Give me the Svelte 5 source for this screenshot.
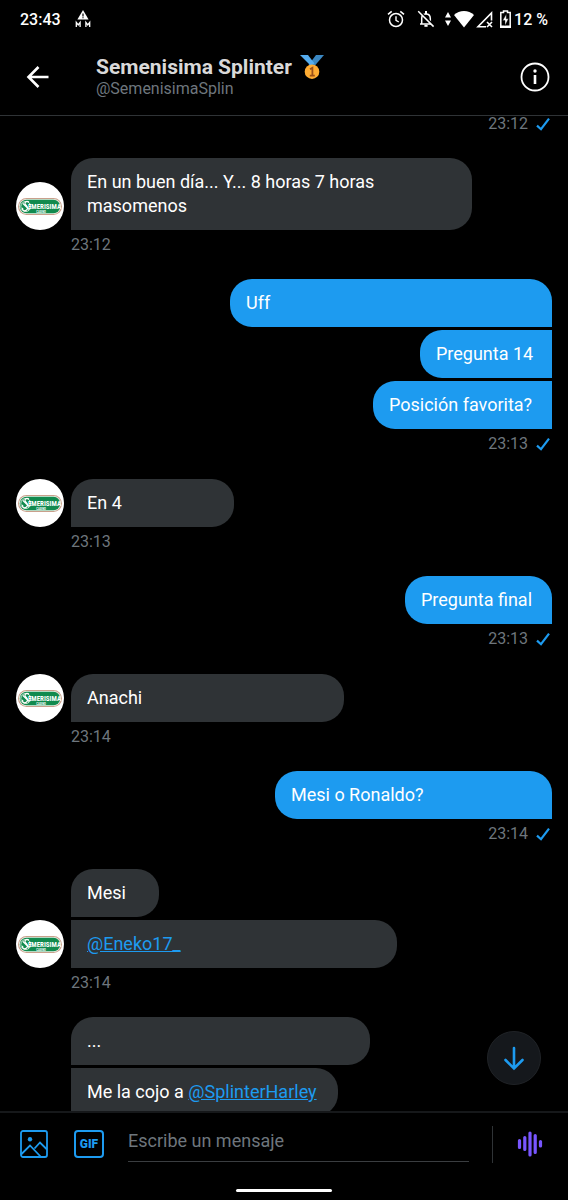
<script>
  const groups = [
    {
      from: 'them',
      time: '23:12',
      items: [{ width: 401, parts: [{ text: 'En un buen día... Y... 8 horas 7 horas masomenos' }] }]
    },
    {
      from: 'me',
      time: '23:13',
      items: [
        { width: 322, parts: [{ text: 'Uff' }] },
        { width: 132, parts: [{ text: 'Pregunta 14' }] },
        { width: 179, parts: [{ text: 'Posición favorita?' }] }
      ]
    },
    { from: 'them', time: '23:13', items: [{ width: 163, parts: [{ text: 'En 4' }] }] },
    { from: 'me', time: '23:13', items: [{ width: 147, parts: [{ text: 'Pregunta final' }] }] },
    { from: 'them', time: '23:14', items: [{ width: 273, parts: [{ text: 'Anachi' }] }] },
    { from: 'me', time: '23:14', items: [{ width: 277, parts: [{ text: 'Mesi o Ronaldo?' }] }] },
    {
      from: 'them',
      time: '23:14',
      items: [
        { width: 88, parts: [{ text: 'Mesi' }] },
        { width: 326, parts: [{ text: '@Eneko17_', link: true }] }
      ]
    },
    {
      from: 'them',
      items: [
        { width: 299, parts: [{ text: '...' }] },
        { width: 267, parts: [{ text: 'Me la cojo a ' }, { text: '@SplinterHarley', link: true }] }
      ]
    }
  ];

  let draft = $state('');
</script>

{#snippet check()}
  <svg class="check" width="14" height="14" viewBox="0 0 14 14" aria-hidden="true">
    <path d="M1 8.600 5 12.200 13 1.600" fill="none" stroke="#1d9bf0" stroke-width="2.200" />
  </svg>
{/snippet}

{#snippet avatar()}
  <svg class="avatar" width="48" height="48" viewBox="0 0 48 48" aria-hidden="true">
    <circle cx="24" cy="24" r="24" fill="#fff" />
    <rect x="2" y="16" width="44" height="17" rx="8.5" fill="#c9a08c" />
    <rect x="3" y="17" width="42" height="15" rx="7.5" fill="#e9f3ea" />
    <rect x="3.8" y="17.8" width="40.4" height="13.4" rx="6.7" fill="#118a4e" />
    <circle cx="9.8" cy="24.5" r="5" fill="none" stroke="#d5ead9" stroke-width="1" />
    <path d="M13 20c-3-1.500-5 .5-3.500 2.500s3.500 3.500 1 5.500-5-.5-3.500-2M7 21.500l6 6" fill="none" stroke="#fff" stroke-width="1.200" />
    <text x="28.500" y="27" text-anchor="middle" class="logo">EMERISIMA</text>
    <text x="25" y="30.600" text-anchor="middle" class="logo small">CASINO</text>
  </svg>
{/snippet}

<div class="app">
  <div class="status">
    <span>23:43</span>
    <svg class="warn" width="16" height="18" viewBox="0 0 16 18" aria-hidden="true">
      <path d="M8 0 13.600 9.500H2.400z" fill="#fff" />
      <path d="M8 3.500v3M8 7.300v1" stroke="#000" stroke-width="1.200" />
      <path d="M1.300 17v-4.600l1.900 2.600 1.900-2.600V17M10.900 17v-4.600l1.900 2.600 1.900-2.600V17" fill="none" stroke="#fff" stroke-width="1.300" />
    </svg>
    <span class="spacer"></span>
    <svg class="alarm" width="18" height="18" viewBox="0 0 18 18" fill="none" stroke="#fff" aria-hidden="true">
      <circle cx="9" cy="10" r="6.500" stroke-width="1.500" />
      <path d="M9 6.200V10.300l2.800 1.700" stroke-width="1.400" />
      <path d="M1 4.400 4.700 1.300M17 4.400 13.300 1.300" stroke-width="1.600" />
    </svg>
    <svg class="bell" width="18" height="18" viewBox="0 0 18 18" fill="none" stroke="#fff" aria-hidden="true">
      <path d="M3 14h12M4.700 14V8.500C4.700 5.800 6.500 4 9 4s4.300 1.800 4.300 4.500V14" stroke-width="1.500" />
      <path d="M9 1v3" stroke-width="2" />
      <path d="M7.400 15.800h3.200" stroke-width="2" />
      <path d="M2.200.6 17.400 15.800" stroke="#000" stroke-width="1.600" />
      <path d="M1.200 1.200 16.600 16.600" stroke-width="1.500" />
    </svg>
    <svg width="6" height="14" viewBox="0 0 6 14" fill="#fff" aria-hidden="true">
      <path d="M3 0 6 5.500H0zM3 14 0 8.500h6z" />
    </svg>
    <svg class="wifi" width="20" height="17" viewBox="0 0 20 17" fill="#fff" aria-hidden="true">
      <path d="M0 4C2.800 1.400 6.200 0 10 0s7.200 1.400 10 4L10 16.500z" />
    </svg>
    <svg class="signal" width="17" height="17" viewBox="0 0 17 17" fill="none" stroke="#fff" aria-hidden="true">
      <path d="M10 15.800H2L15.500 2v7.500" stroke-width="1.600" />
      <path d="m11 11 5 5m0-5-5 5" stroke-width="1.600" />
    </svg>
    <svg class="battery" width="11" height="18" viewBox="0 0 11 18" aria-hidden="true">
      <path d="M3.500 1h4v1.500h2.700V17.200H.8V2.500h2.700z" fill="none" stroke="#fff" stroke-width="1.500" />
      <path d="M0 15.500h11V18H0z" fill="#fff" />
      <path d="M6.300 4 2.700 10.500H5V15.500L8.500 8.800H6.300z" fill="#fff" stroke="#000" stroke-width=".4" />
    </svg>
    <span>12 %</span>
  </div>

  <header>
    <button class="back" aria-label="Atrás">
      <svg width="24" height="24" viewBox="0 0 24 24" fill="none" stroke="#fff" stroke-width="2.600" aria-hidden="true">
        <path d="M22.500 12H3M12.500 2 2.500 12l10 10" />
      </svg>
    </button>
    <div class="who">
      <h1>
        Semenisima Splinter
        <svg width="24" height="24" viewBox="0 0 24 24" aria-hidden="true">
          <path d="M24 0h-8L8.500 10l6 1z" fill="#3b88c3" />
          <path d="M0 0h8l6.500 8.500-4 2z" fill="#55acee" />
          <circle cx="12" cy="16.700" r="7.300" fill="#ffac33" />
          <path d="M10 14.300 12.400 12.800V20.600M9.800 20.600h5" fill="none" stroke="#9a4f18" stroke-width="1.800" />
        </svg>
      </h1>
      <p>@SemenisimaSplin</p>
    </div>
    <button class="info" aria-label="Información">
      <svg width="30" height="30" viewBox="0 0 30 30" aria-hidden="true">
        <circle cx="15" cy="15" r="13.500" fill="none" stroke="#fff" stroke-width="1.800" />
        <path d="M15 13v9" stroke="#fff" stroke-width="2.600" />
        <circle cx="15" cy="9" r="1.700" fill="#fff" />
      </svg>
    </button>
  </header>

  <main>
    <div class="thread">
      <div class="meta me">23:12 {@render check()}</div>
      {#each groups as group}
        <section class={group.from}>
          <div class="row">
            {#if group.from === 'them'}
              <div class="side">{#if group.time}{@render avatar()}{/if}</div>
            {/if}
            <div class="stack">
              {#each group.items as item}
                <div class="bubble" style:width={`${item.width}px`}>
                  {#each item.parts as part}{#if part.link}<a href="#profile">{part.text}</a>{:else}{part.text}{/if}{/each}
                </div>
              {/each}
            </div>
          </div>
          {#if group.time}
            <div class="meta {group.from}">
              {group.time}
              {#if group.from === 'me'}{@render check()}{/if}
            </div>
          {/if}
        </section>
      {/each}
    </div>
    <button class="down" aria-label="Ir al final">
      <svg width="22" height="26" viewBox="0 0 22 26" fill="none" stroke="#1d9bf0" stroke-width="2.600" stroke-linecap="round" aria-hidden="true">
        <path d="M11 3v20M2.500 15 11 23.500 19.500 15" />
      </svg>
    </button>
  </main>

  <footer>
    <div class="composer">
      <button aria-label="Imagen">
        <svg width="28" height="28" viewBox="0 0 28 28" fill="none" stroke="#1d9bf0" stroke-width="1.800" aria-hidden="true">
          <rect x="1" y="1" width="26" height="26" rx="2" />
          <path d="M1 24.500 10 15.500 21 27M14.500 18.500 20 12.500 27 19.500" />
          <circle cx="10" cy="9.300" r="2.200" fill="#1d9bf0" stroke="none" />
        </svg>
      </button>
      <button class="gif" aria-label="GIF">GIF</button>
      <input type="text" aria-label="Mensaje" placeholder="Escribe un mensaje" bind:value={draft} />
      <span class="divider"></span>
      <button aria-label="Mensaje de voz">
        <svg width="26" height="26" viewBox="0 0 26 26" fill="none" stroke="#7856ff" stroke-width="3.200" stroke-linecap="round" aria-hidden="true">
          <path d="M2.500 9.500v7M7.800 6.500v12M13 2v22M18.200 4.500v17M23.500 10.500v4.500" />
        </svg>
      </button>
    </div>
    <div class="home"></div>
  </footer>
</div>

<style>
  :global(body) {
    background: #000;
  }
  .app {
    display: flex;
    flex-direction: column;
    height: 100vh;
    background: #000;
    color: #fff;
    font-family: Roboto, sans-serif;
  }
  button {
    display: flex;
    align-items: center;
    justify-content: center;
    flex: none;
    padding: 0;
    border: 0;
    background: none;
    font-family: inherit;
  }
  svg {
    display: block;
    flex: none;
  }
  .status {
    display: flex;
    align-items: center;
    height: 38px;
    flex: none;
    padding: 0 20px;
    font-size: 16px;
    font-weight: 500;
  }
  .warn {
    margin-left: 14px;
  }
  .spacer {
    flex: 1;
  }
  .alarm {
    margin-right: 12px;
  }
  .bell {
    margin-right: 10px;
  }
  .wifi {
    margin: 0 2px 0 3px;
  }
  .battery {
    margin: 0 3px 0 7px;
  }
  header {
    display: flex;
    align-items: center;
    height: 77px;
    flex: none;
    padding: 0 18px 0 26px;
    border-bottom: 1px solid #2f3336;
  }
  .who {
    flex: 1;
    margin-left: 46px;
  }
  h1 {
    display: flex;
    align-items: center;
    gap: 8px;
    margin: 0;
    font-size: 21px;
    line-height: 24px;
    font-weight: 700;
    color: #d9d9d9;
  }
  p {
    margin: 0;
    font-size: 16px;
    line-height: 20px;
    color: #6e767d;
  }
  main {
    position: relative;
    flex: 1;
    min-height: 0;
    overflow: hidden;
  }
  .thread {
    padding: 0 16px;
  }
  .row {
    display: flex;
    align-items: flex-end;
  }
  .me .row {
    justify-content: flex-end;
  }
  .side {
    flex: none;
    width: 55px;
  }
  .stack {
    display: flex;
    flex-direction: column;
    gap: 3px;
  }
  .me .stack {
    align-items: flex-end;
  }
  .them .stack {
    align-items: flex-start;
  }
  .bubble {
    box-sizing: border-box;
    max-width: 100%;
    padding: 12px 16px;
    border-radius: 22px;
    background: #2f3336;
    font-size: 18px;
    line-height: 24px;
  }
  .me .bubble {
    background: #1d9bf0;
    border-bottom-right-radius: 0;
  }
  .me .bubble + .bubble {
    border-top-right-radius: 0;
  }
  .them .bubble {
    border-bottom-left-radius: 0;
  }
  .them .bubble + .bubble {
    border-top-left-radius: 0;
  }
  a {
    color: #1d9bf0;
    text-decoration: underline;
  }
  .meta {
    display: flex;
    align-items: center;
    padding: 7px 0 26px 55px;
    font-size: 16px;
    line-height: 16px;
    color: #6e767d;
  }
  .meta.me {
    justify-content: flex-end;
    gap: 8px;
    padding: 7px 2px 27px 0;
  }
  .thread > .meta.me {
    padding: 0 2px 26px 0;
  }
  .logo {
    font: 700 7px "Liberation Sans Narrow", "Roboto Condensed", sans-serif;
    fill: #fff;
  }
  .small {
    font-size: 3px;
  }
  .down {
    position: absolute;
    right: 27px;
    bottom: 26px;
    width: 54px;
    height: 54px;
    border: 1px solid #202327;
    border-radius: 50%;
    background: #15181c;
  }
  footer {
    flex: none;
    border-top: 2px solid #16181a;
  }
  .composer {
    display: flex;
    align-items: center;
    height: 62px;
    padding: 0 25px 0 20px;
  }
  .gif {
    box-sizing: border-box;
    width: 30px;
    height: 28px;
    margin: 0 24px 0 26px;
    border: 2px solid #1d9bf0;
    border-radius: 4px;
    color: #1d9bf0;
    font-size: 12px;
    font-weight: 900;
  }
  input {
    box-sizing: border-box;
    flex: 1;
    min-width: 0;
    height: 36px;
    padding: 0 0 6px;
    border: 0;
    border-bottom: 1px solid #3a3d40;
    border-radius: 0;
    outline: 0;
    background: none;
    color: #fff;
    font-family: inherit;
    font-size: 18px;
  }
  input::placeholder {
    color: #6e767d;
    opacity: 1;
  }
  .divider {
    width: 1px;
    height: 37px;
    margin: 0 24px 0 23px;
    background: #2f3336;
  }
  .home {
    width: 96px;
    height: 3px;
    margin: 14px auto 8px;
    border-radius: 2px;
    background: #fff;
  }
</style>
